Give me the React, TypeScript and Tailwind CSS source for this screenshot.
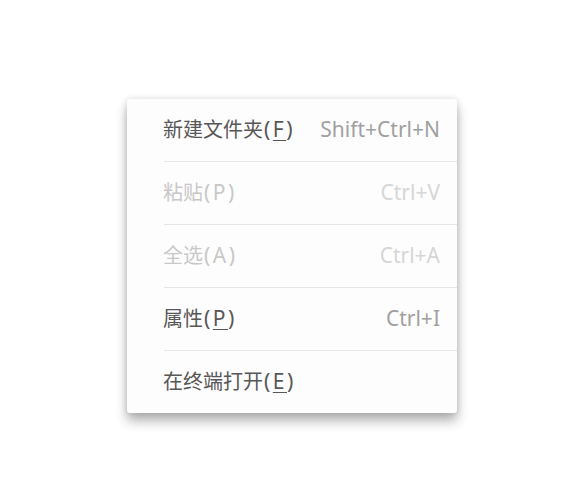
import React from "react";

type MenuItem = {
  label: string;
  mnemonic?: string;
  shortcut?: string;
  disabled?: boolean;
};

const items: MenuItem[] = [
  { label: "新建文件夹", mnemonic: "F", shortcut: "Shift+Ctrl+N" },
  { label: "粘贴", mnemonic: "P", shortcut: "Ctrl+V", disabled: true },
  { label: "全选", mnemonic: "A", shortcut: "Ctrl+A", disabled: true },
  { label: "属性", mnemonic: "P", shortcut: "Ctrl+I" },
  { label: "在终端打开", mnemonic: "E" },
];

const Row: React.FC<{ item: MenuItem }> = ({ item }) => {
  const labelColor = item.disabled ? "text-[#c8c8c8]" : "text-[#575757]";
  const keyColor = item.disabled ? "text-[#d6d6d6]" : "text-[#a0a0a0]";
  return (
    <div className="flex h-[62px] items-center justify-between pl-[36px] pr-[17px]">
      <span className={`text-[20px] ${labelColor}`}>
        {item.label}
        <span className="ml-[1px] text-[21px] tracking-[2.5px]">
          (
          {item.disabled ? (
            item.mnemonic
          ) : (
            <span className="underline decoration-1 underline-offset-[3px]">{item.mnemonic}</span>
          )}
          )
        </span>
      </span>
      {item.shortcut && <span className={`text-[21px] ${keyColor}`}>{item.shortcut}</span>}
    </div>
  );
};

export default function App() {
  return (
    <div
      className="min-h-[498px] bg-white pl-[127px] pt-[99px]"
      style={{ fontFamily: '"Noto Sans", "Noto Sans CJK SC", sans-serif' }}
    >
      <div className="w-[330px] rounded-[3px] bg-[#fdfdfd] shadow-[0_8px_12px_rgba(0,0,0,0.3),0_0_6px_rgba(0,0,0,0.12)]">
        {items.map((item, i) => (
          <React.Fragment key={item.label}>
            {i > 0 && <div className="ml-[37px] h-px bg-[#e6e6e6]" />}
            <Row item={item} />
          </React.Fragment>
        ))}
      </div>
    </div>
  );
}
